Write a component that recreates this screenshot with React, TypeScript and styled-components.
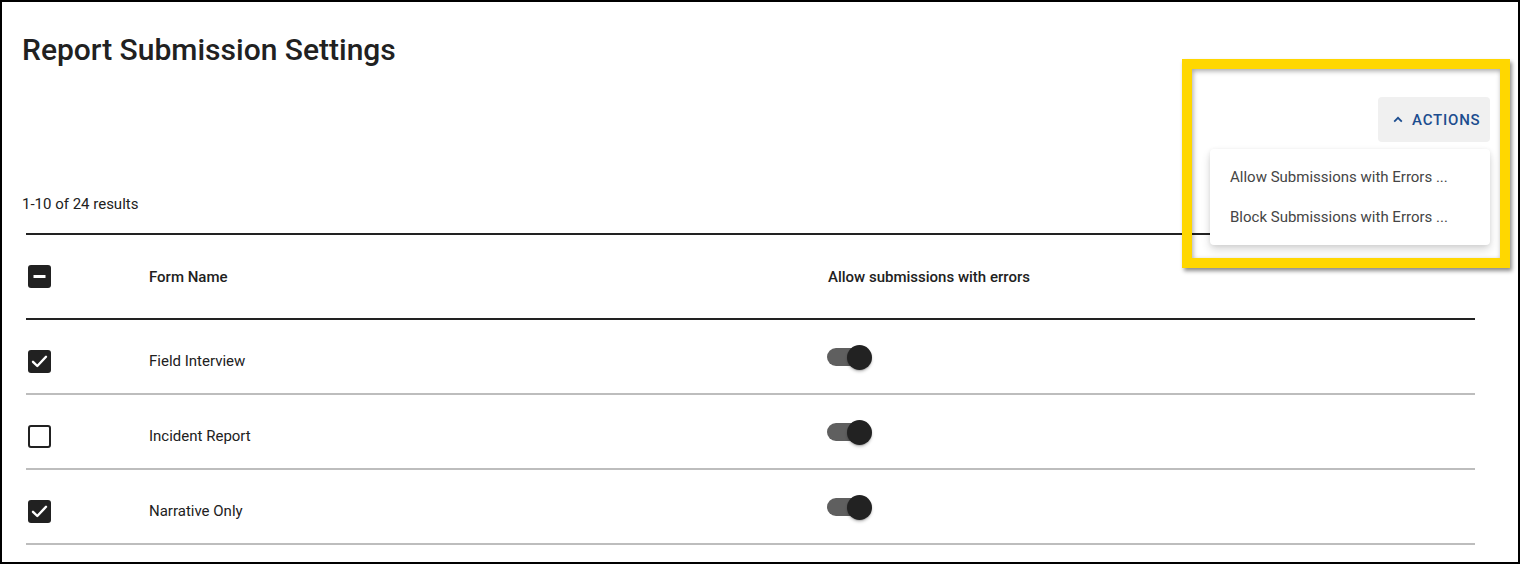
import React from "react";
import styled, { createGlobalStyle } from "styled-components";

const GlobalStyle = createGlobalStyle`
  html, body { margin: 0; padding: 0; background: #fff; }
  body { font-family: Roboto, "Noto Sans", Arial, sans-serif; color: #212121; }
  * { box-sizing: border-box; }
`;

const Frame = styled.div`
  position: relative;
  width: 1520px;
  height: 564px;
  border: 2px solid #000;
  overflow: hidden;
  padding: 30px 28px 0 20px;
  background: #fff;
`;

const Title = styled.h1`
  margin: 0;
  font-size: 30px;
  line-height: 36px;
  font-weight: 500;
  color: #212121;
  letter-spacing: 0;
`;

const Toolbar = styled.div`
  display: flex;
  justify-content: flex-end;
  margin-top: 29px;
`;

const ActionsWrap = styled.div`
  position: relative;
`;

const ActionsButton = styled.button`
  display: flex;
  align-items: center;
  gap: 9px;
  height: 45px;
  width: 112px;
  padding: 0 0 0 15px;
  border: none;
  border-radius: 4px;
  background: #f0f0f0;
  color: #1c4d8f;
  font-family: Roboto, Arial, sans-serif;
  font-size: 15px;
  font-weight: 500;
  letter-spacing: 0.8px;
  cursor: pointer;
`;

const Menu = styled.div`
  position: absolute;
  top: 52px;
  right: 0;
  width: 280px;
  padding: 8px 0;
  background: #fff;
  border-radius: 4px;
  box-shadow: 0 5px 10px rgba(0, 0, 0, 0.14), 0 1px 4px rgba(0, 0, 0, 0.08);
  z-index: 2;
`;

const MenuItem = styled.div`
  height: 40px;
  display: flex;
  align-items: center;
  padding-left: 20px;
  font-size: 15px;
  color: #454545;
  white-space: nowrap;
`;

const Results = styled.div`
  margin-top: 52px;
  font-size: 15px;
  line-height: 20px;
  color: #212121;
`;

const Table = styled.div`
  margin: 19px 0 0 4px;
  width: 1449px;
  border-top: 2px solid #222;
`;

const Row = styled.div<{ $header?: boolean }>`
  display: grid;
  grid-template-columns: 123px 679px 1fr;
  align-items: center;
  height: ${(p) => (p.$header ? "85px" : "75px")};
  padding-top: ${(p) => (p.$header ? "0" : "9px")};
  border-bottom: 2px solid ${(p) => (p.$header ? "#222" : "#bdbdbd")};
  font-size: 15px;
  font-weight: ${(p) => (p.$header ? 500 : 400)};
  color: #212121;
`;

const CheckCell = styled.div`
  padding-left: 2px;
  display: flex;
  align-items: center;
`;

const Box = styled.div<{ $filled: boolean }>`
  width: 23px;
  height: 23px;
  border-radius: 3px;
  background: ${(p) => (p.$filled ? "#212121" : "#fff")};
  border: ${(p) => (p.$filled ? "none" : "2px solid #212121")};
  display: flex;
  align-items: center;
  justify-content: center;
`;

const SwitchTrack = styled.div`
  position: relative;
  width: 42px;
  height: 18px;
  border-radius: 9px;
  background: #5f5f5f;
  margin-left: -1px;
  margin-bottom: 8px;
`;

const SwitchThumb = styled.div`
  position: absolute;
  right: -3px;
  top: -3px;
  width: 25px;
  height: 25px;
  border-radius: 50%;
  background: #222;
  box-shadow: 0 2px 3px rgba(0, 0, 0, 0.2), 0 1px 1px rgba(0, 0, 0, 0.14);
`;

const Highlight = styled.div`
  position: absolute;
  left: 1180px;
  top: 57px;
  width: 328px;
  height: 209px;
  border: 10px solid #ffd700;
  box-shadow: 2px 3px 4px rgba(0, 0, 0, 0.45), inset 1px 2px 5px rgba(0, 0, 0, 0.35);
  pointer-events: none;
  z-index: 3;
`;

const Checkbox: React.FC<{ state: "checked" | "unchecked" | "indeterminate" }> = ({ state }) => (
  <Box $filled={state !== "unchecked"}>
    {state === "checked" && (
      <svg width="23" height="23" viewBox="0 0 23 23">
        <polyline points="5,11.8 9.3,16 18,6.8" fill="none" stroke="#fff" strokeWidth="2.4" strokeLinecap="round" strokeLinejoin="round" />
      </svg>
    )}
    {state === "indeterminate" && (
      <svg width="23" height="23" viewBox="0 0 23 23">
        <rect x="5.5" y="10" width="12" height="3" fill="#fff" />
      </svg>
    )}
  </Box>
);

const Switch: React.FC = () => (
  <SwitchTrack>
    <SwitchThumb />
  </SwitchTrack>
);

const rows = [
  { name: "Field Interview", checked: true },
  { name: "Incident Report", checked: false },
  { name: "Narrative Only", checked: true },
];

export default function App() {
  return (
    <>
      <GlobalStyle />
      <Frame>
        <Title>Report Submission Settings</Title>
        <Toolbar>
          <ActionsWrap>
            <ActionsButton>
              <svg width="10" height="7" viewBox="0 0 10 7">
                <polyline points="1.2,5.6 5,1.8 8.8,5.6" fill="none" stroke="#1c4d8f" strokeWidth="1.8" />
              </svg>
              ACTIONS
            </ActionsButton>
            <Menu>
              <MenuItem>Allow Submissions with Errors ...</MenuItem>
              <MenuItem>Block Submissions with Errors ...</MenuItem>
            </Menu>
          </ActionsWrap>
        </Toolbar>
        <Results>1-10 of 24 results</Results>
        <Table>
          <Row $header>
            <CheckCell>
              <Checkbox state="indeterminate" />
            </CheckCell>
            <div>Form Name</div>
            <div>Allow submissions with errors</div>
          </Row>
          {rows.map((r) => (
            <Row key={r.name}>
              <CheckCell>
                <Checkbox state={r.checked ? "checked" : "unchecked"} />
              </CheckCell>
              <div>{r.name}</div>
              <div>
                <Switch />
              </div>
            </Row>
          ))}
        </Table>
        <Highlight />
      </Frame>
    </>
  );
}
